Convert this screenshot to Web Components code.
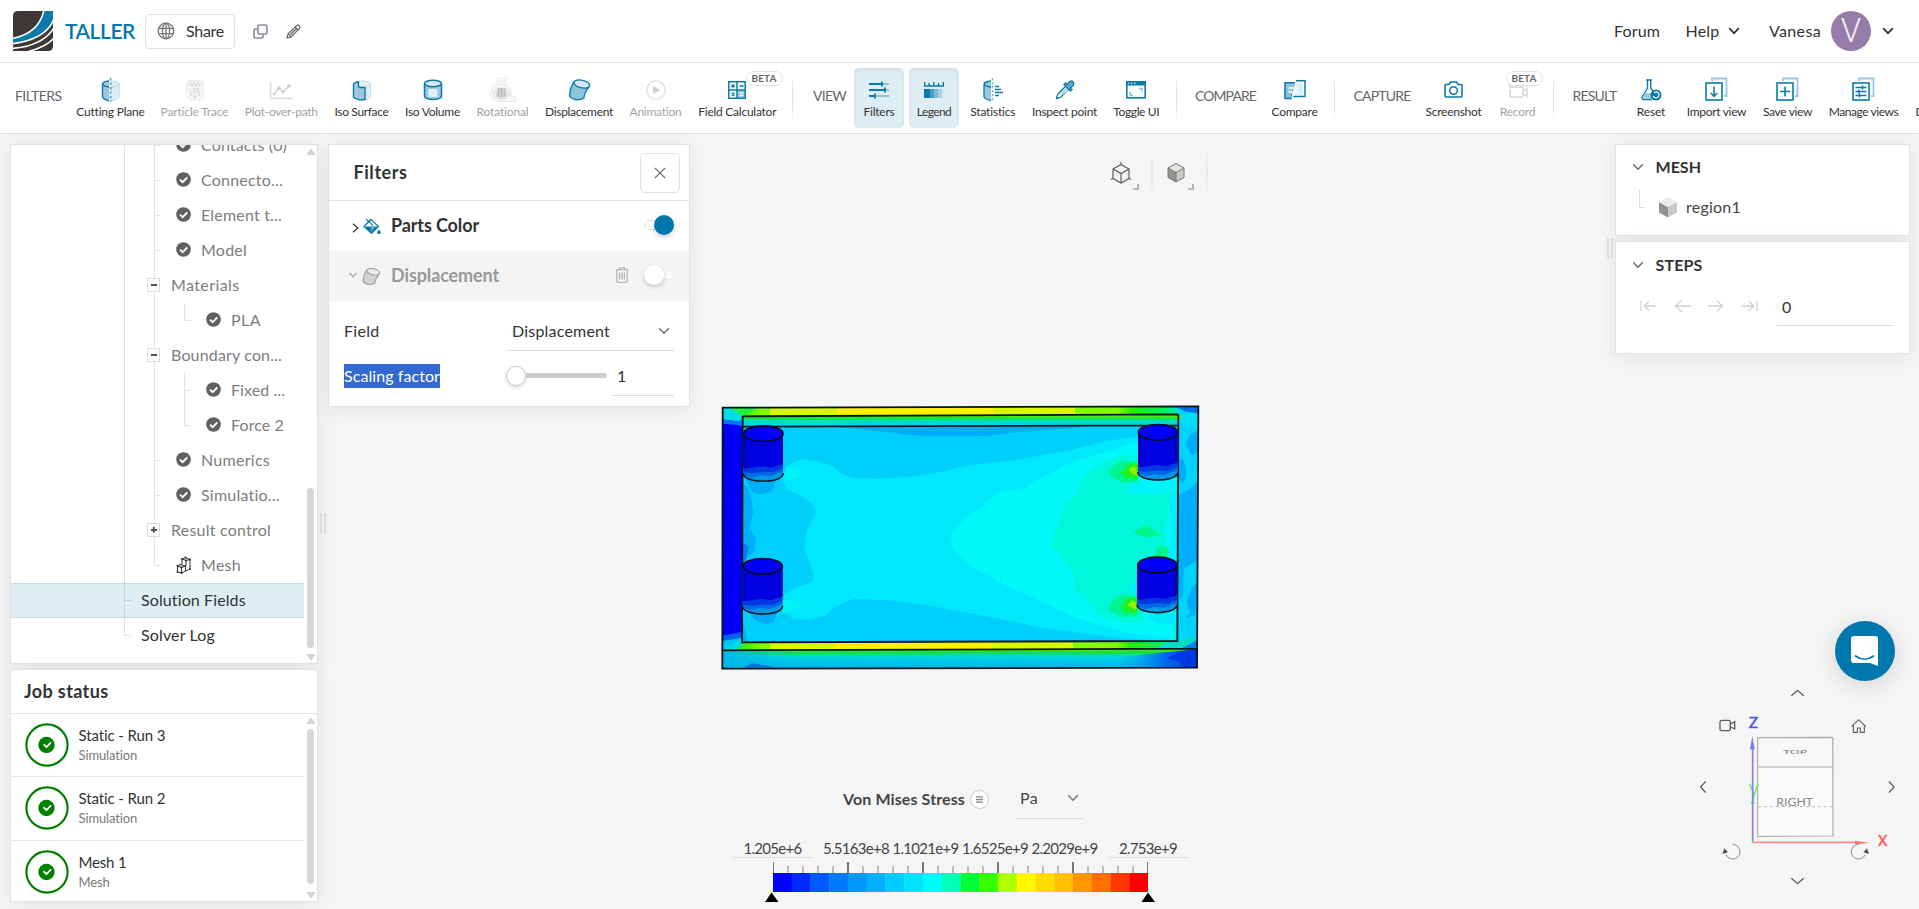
<!DOCTYPE html>
<html lang="en">
<head>
<meta charset="utf-8">
<title>TALLER</title>
<style>
html,body{margin:0;height:100%;overflow:hidden;background:#f5f5f5}
body{font:16px/20px Lato,"Liberation Sans",sans-serif;color:#333}
</style>
</head>
<body>
<sim-app></sim-app>
<script>
const define=(name,css,html,setup)=>customElements.define(name,class extends HTMLElement{
  connectedCallback(){
    if(this.shadowRoot)return;
    const root=this.attachShadow({mode:'open'});
    const t=document.createElement('template');
    t.innerHTML=`<style>${css}</style>${typeof html==='function'?html(this):html}`;
    root.append(t.content.cloneNode(true));
    if(setup)setup(this,root);
  }
});

/* Text whose tracking is adjusted so that it fills a given width */
define('fit-text',':host{display:inline-block;white-space:nowrap}span{display:inline-block}','<span><slot></slot></span>',(el,root)=>{
  const w=+el.getAttribute('w'),s=root.querySelector('span'),n=el.textContent.length;
  const now=s.getBoundingClientRect().width;
  if(w&&now)s.style.letterSpacing=((w-now)/n).toFixed(3)+'px';
});

const B='#0a7aab',L='#9cc9de',P='#dcedf5';
const svg=(w,h,b,x='')=>`<svg width="${w}" height="${h}" viewBox="0 0 ${w} ${h}" fill="none" ${x}>${b}</svg>`;
const disp=(a,l,p,d)=>`<path d="M3 6C8 1 14 2 17 4" stroke="${p}" stroke-width="1.2"/><path d="M2.500 5V16" stroke="${p}"/><path d="M7 4C4 8 3 13 2.500 18C5 22 12 23 17 20C17 15 20 12 22.500 8Z" fill="${l}" stroke="${a}" stroke-width="1.300"/><ellipse cx="14.800" cy="6" rx="8" ry="3.800" transform="rotate(12 14.800 6)" fill="${p}" stroke="${a}" stroke-width="1.300"/><path d="M4 16c4 3 8 3 13 1" stroke="${l}"/>`;
const pages=`<path d="M7 4V1.500H21.500V19H19" stroke="#9cc9de" stroke-width="1.800"/><rect x="1" y="6" width="16" height="17" fill="#fff" stroke="${B}" stroke-width="1.600"/>`;
const ICONS={
 logo:svg(40,40,`<defs><clipPath id="c"><path d="M5 0H40V35Q40 40 35 40H0V5Q0 0 5 0Z"/></clipPath></defs><g clip-path="url(#c)"><path d="M0 0H40V40H0Z" fill="#3e3735"/><path d="M31 -1C28 13 18 24 -1 27.500V33C22 30 36 21 41 8V-1Z" fill="#0a7aab"/><path d="M31 -1C28 13 18 24 -1 27.500M41 8C36 21 22 30 -1 32.800M41 17C34 28 20 36 -1 37.500M41 27C35 34 25 38 14 41" stroke="#fff" stroke-width="1.600"/></g>`),
 globe:svg(18,18,`<g stroke="#777" stroke-width="1.300"><circle cx="9" cy="9" r="7.800"/><ellipse cx="9" cy="9" rx="3.600" ry="7.800"/><path d="M1.500 6.300H16.500M1.500 11.700H16.500M9 1V17"/></g>`),
 copy:svg(15,15,`<g stroke="#59596a" stroke-width="1.100"><rect x="5" y="1" width="9" height="9" rx="1"/><path d="M4.500 5H2Q1 5 1 6V13Q1 14 2 14H9Q10 14 10 13V10.500"/></g>`),
 pencil:svg(15,15,`<g stroke="#59595f" stroke-width="1.100"><path d="M1 14L2 10L10.500 1.600Q12 .6 13.300 1.900T13.400 4.600L5 13Z"/><path d="M9 3L12 6M2.200 10L5 12.800M4.500 10.500L10.500 4.500"/></g>`),
 down:svg(12,8,`<path d="M1.200 1.200L6 6.200L10.800 1.200" stroke="currentColor" stroke-width="var(--sw,1.500)"/>`),
 cutting:svg(20,24,`<path d="M1.500 6V19Q3 22 8 22.500V3Q2.500 3.500 1.500 6Z" fill="${L}"/><path d="M8 3Q2 3.500 1.500 6Q2.500 8.500 8 9M1.500 6V19Q3 22 8 22.500" stroke="${B}" stroke-width="1.400"/><path d="M10.500 3Q17.500 3.500 18.300 6V19Q17 22 10.500 22.500Z" fill="${P}" stroke="#c3deea"/><path d="M18 6Q16 9 11 9" stroke="#b5d7e6"/><path d="M9.500 0V24" stroke="#5fa9c8" stroke-width="1.800" stroke-dasharray="2.500 2"/>`),
 particle:svg(20,24,`<path d="M1.500 5V19C3 23 17 23 18.500 19V5" fill="#f6f6f6" stroke="#ececec"/><ellipse cx="10" cy="5" rx="8.500" ry="2.800" fill="#f5f5f5" stroke="#e7e7e7"/><path d="M5 4l2 4 2-4 2 4 2-4 2 4M6 10q-2 2 0 4q2 2 0 4M10 9v10M14 10q-2 2 0 4q2 2 0 4M6 18l-1.500-2M10 20l-2-2M10 20l2-2M14 18l1.500-2M8 10q2 3 0 5M12 10q2 3 0 5" stroke="#d6d6d6"/>`),
 plot:svg(24,24,`<path d="M1.700 4V20.300H23" stroke="#dedede" stroke-width="1.700"/><path d="M5 16L10 10L14 14L20 8" stroke="#ccc" stroke-width="1.400"/><g fill="#ccc"><circle cx="5" cy="16" r="1.200"/><circle cx="10" cy="10" r="1.700"/><circle cx="14" cy="14" r="1.700"/><circle cx="20" cy="8" r="1.700"/></g>`),
 isosurf:svg(20,24,`<path d="M1.500 6V19C3 23 17 23 18.500 19V6" fill="${P}" stroke="#c3deea"/><ellipse cx="10" cy="6" rx="8.500" ry="3" fill="#e6f2f7" stroke="#b9d9e7"/><path d="M1.500 6V19C3 21.500 9 22.500 13 21.500V9.500H6.500V4Q2 4.500 1.500 6Z" fill="${L}" stroke="${B}" stroke-width="1.400"/><path d="M6.500 9.500V21" stroke="#8abed6"/>`),
 isovol:svg(20,24,`<path d="M1.500 5.500V18.500C3 22.500 17 22.500 18.500 18.500V5.500" fill="${L}" stroke="${B}" stroke-width="1.500"/><ellipse cx="10" cy="5.500" rx="8.500" ry="3.200" fill="#d6eaf3" stroke="${B}" stroke-width="1.500"/><rect x="5.500" y="11" width="9" height="8" fill="#e4f1f7"/>`),
 rotational:svg(28,26,`<path d="M8 2.500V8.500H17V2.500" fill="#f7f7f7" stroke="#eee"/><ellipse cx="12.500" cy="2.500" rx="4.500" ry="1.700" stroke="#e8e8e8"/><path d="M12 7C4 7 1.500 13 1.500 17C2 22 6 24.500 12 24.500H26.500V19H22.500C23 11 18 7 12 7Z" fill="#f7f7f7" stroke="#e8e8e8"/><ellipse cx="12.500" cy="16.500" rx="8" ry="5.500" fill="#f0f0f0" stroke="#dadada"/><path d="M7 19L9 11H16L18 19Q12 22 7 19Z" fill="#d0d0d0"/><path d="M10 11L9 20M12.500 11V21M15 11L16 20" stroke="#bebebe"/>`),
 displacement:svg(24,24,disp(B,'#8fc3da','#d4e8f1')),
 dispgray:svg(20,18,`<g transform="scale(.82 .8)">${disp('#999','#d3d3d3','#e9e9e9')}</g>`),
 play:svg(20,20,`<circle cx="10" cy="10" r="9.200" stroke="#dedede" stroke-width="1.300"/><path d="M7 6V14L14.500 10Z" fill="#d0d0d0"/>`),
 calc:svg(18,18,`<path d="M9 9H17.500V17.500H9Z" fill="#9cc9de"/><path d="M.8 .8H17.200V17.200H.8ZM9 .8V17.200M.8 9H17.200" stroke="${B}" stroke-width="1.500"/><path d="M3 5H7M5 3V7M11.500 5H15.500M3.700 11.700L6.500 14.500M6.500 11.700L3.700 14.500" stroke="${B}" stroke-width="1.300"/><path d="M11.500 12H15.500M11.500 14.500H15.500" stroke="#fff"/>`),
 sliders:svg(20,18,`<g stroke="#8fc3da" stroke-width="2"><path d="M0 3H20M0 9H20M0 15H20"/></g><g stroke="${B}" stroke-width="2"><path d="M0 3H13M6 9H16M0 9H15M0 15H6"/></g><path d="M13 .5V5.500M16 6.500V11.500M6 12.500V17.500" stroke="${B}" stroke-width="1.800"/>`),
 legend:svg(20,18,`<path d="M.7 1V5H19.300V1M5 2V5M9.800 1V5M14.500 2V5" stroke="${B}" stroke-width="1.400"/><path d="M0 8H6V17H0Z" fill="${B}"/><path d="M6 8H10V17H6Z" fill="#4d9dc0"/><path d="M10 8H14V17H10Z" fill="#7fb9d1"/><path d="M14 8H18V17H14Z" fill="#a9d0e1"/><path d="M18 8H20V17H18Z" fill="#cfe5ef"/>`),
 statistics:svg(20,24,`<path d="M1 6V19Q3 22 8 22.500V3Q2 3.500 1 6Z" fill="${L}"/><path d="M8 3Q2 3.500 1 6Q2 8.500 8 9M1 6V19Q3 22 8 22.500" stroke="${B}" stroke-width="1.300"/><path d="M9.500 0V24" stroke="#7fb9d1" stroke-width="1.600" stroke-dasharray="2.500 1.500"/><path d="M12 8.500H16M12 11.500H18M12 14.500H20M12 17.500H16" stroke="${B}" stroke-width="1.300"/>`),
 dropper:svg(20,20,`<path d="M11 6L3 14Q2 16 1.500 18.500Q4 18 6 17L14 9" fill="#fff" stroke="${B}" stroke-width="1.300"/><path d="M4.500 14.500H9L14 9.500L11 7Z" fill="#b7d8e6"/><path d="M9 4.500L15.500 11L17 9.500L15.500 8L18.500 5Q19.500 3 18 1.700T14.800 1.500L12 4.500L10.500 3Z" fill="#5fa9c8" stroke="${B}" stroke-width="1.300"/>`),
 toggle:svg(20,18,`<rect x=".8" y=".8" width="18.400" height="16" fill="#fff" stroke="${B}" stroke-width="1.600"/><path d="M0 0H20V4.500H0Z" fill="${B}"/><path d="M2 2.200H3.500M5 2.200H6.500M8 2.200H9.500" stroke="#fff"/><path d="M4 11V14H7M13 7.500H16V10.500" stroke="#7fb9d1" stroke-width="1.300"/>`),
 compare:svg(22,20,`<path d="M12 .8H21V16.500H9" stroke="${B}" stroke-width="1.500"/><path d="M1 2.800H11.500L7 18.500H1Z" fill="#8fc3da" stroke="${B}" stroke-width="1.500"/><path d="M12 3H19V14.500H10Z" fill="#dcedf5"/><path d="M4.500 8H14M4.500 12H15M12 2L8 18" stroke="#fff" stroke-width="1.700"/>`),
 camera:svg(20,18,`<path d="M1 4.500Q1 3.500 2 3.500H5L6.500 1H12.500L14 3.500H17Q18 3.500 18 4.500V15Q18 16 17 16H2Q1 16 1 15Z" stroke="${B}" stroke-width="1.600"/><circle cx="9.500" cy="9.500" r="3.800" stroke="${B}" stroke-width="1.500"/>`),
 record:svg(22,18,`<path d="M3 8V15Q3 16 4 16H15Q16 16 16 15V8Q16 6 14 6H2M16 10L20 8V15L16 13M2 2Q2 6 6 6H12Q17 6 17 2" stroke="#d6d6d6" stroke-width="1.500"/>`),
 reset:svg(21,22,`<path d="M5 1H11M6.500 1V9L1 18.500Q.8 20.500 2.500 20.500H11" stroke="${B}" stroke-width="1.300"/><path d="M9.700 1V9L14 15" stroke="${B}" stroke-width="1.300"/><path d="M3.500 14H12V20H2Z" fill="#9cc9de"/><circle cx="15" cy="16" r="5.500" fill="${B}"/><path d="M12.200 17A3 3 0 1 0 13 13.700" stroke="#fff" stroke-width="1.200"/>`),
 import:svg(24,25,pages+`<path d="M9 9.500V19M5.800 16L9 19.300L12.200 16" stroke="${B}" stroke-width="1.500"/>`),
 save:svg(24,25,pages+`<path d="M9 9.500V19.500M4 14.500H14" stroke="${B}" stroke-width="1.600"/>`),
 manage:svg(24,25,pages+`<path d="M3.500 10.500H14.500M3.500 14.500H14.500M3.500 18.500H14.500M10.500 8.500V12.500M7 12.500V16.500M7.500 16.500V20.500" stroke="${B}" stroke-width="1.400"/>`),
 check:svg(15,15,`<circle cx="7.500" cy="7.500" r="7.300" fill="#606060"/><path d="M4 7.600L6.700 10.200L11.300 5.300" stroke="#fff" stroke-width="1.900"/>`),
 mesh:svg(16,18,`<g stroke="#444" stroke-width="1.100"><path d="M1.500 10V16L5.500 17L14 13V3.500L9.500 1.500L6 3V9.500M1.500 10L4 8.500L9.500 10V15M1.500 10L5.500 11.500V17M5.500 11.500L9.500 10M6 3L10 4.500L14 3.500M10 4.500V10"/></g><g fill="#333"><circle cx="1.500" cy="10" r="1"/><circle cx="1.500" cy="16" r="1"/><circle cx="5.500" cy="11.500" r="1"/><circle cx="5.500" cy="17" r="1"/><circle cx="6" cy="3" r="1"/><circle cx="9.500" cy="1.500" r="1"/><circle cx="14" cy="3.500" r="1"/><circle cx="14" cy="13" r="1"/><circle cx="10" cy="4.500" r="1"/></g>`),
 done:svg(44,44,`<circle cx="22" cy="22" r="20.600" fill="#fff" stroke="#008000" stroke-width="2.200"/><circle cx="21.500" cy="22" r="8.200" fill="#008000"/><path d="M18.500 21.300L21.500 24L26 19.300" stroke="#fff" stroke-width="1.700"/>`),
 close:svg(12,12,`<path d="M.8 .8L11.200 11.200M11.200 .8L.8 11.200" stroke="#666" stroke-width="1.200"/>`),
 right:svg(7,10,`<path d="M1 .8L5.800 5L1 9.200" stroke="#333" stroke-width="1.300"/>`),
 bucket:svg(18,17,`<path d="M1 8.500L8 1.500L15.500 8.500L8.500 15.500Z" fill="#fff" stroke="${B}" stroke-width="1.200"/><path d="M1 8.500H15L8.500 15.500Z" fill="${B}"/><path d="M8 8.500H12L8.500 14Z" fill="#69aeca"/><path d="M3 .8L10 7.500M8 1.500L4 5" stroke="${B}" stroke-width="1.100"/><path d="M16 11.200Q13.800 14 14.200 15.200Q16 17 17.700 15.200Q18 14 16 11.200Z" fill="${B}"/>`),
 trash:svg(14,16,`<path d="M.5 2.800H13.500M4.500 2.500V.8H9.500V2.500M1.800 3.200V14Q1.800 15.300 3 15.300H11Q12.200 15.300 12.200 14V3.200M4.700 5.500V12.500M7 5.500V12.500M9.300 5.500V12.500" stroke="#aaa" stroke-width="1.100"/>`),
 cubewire:svg(22,24,`<path d="M11 3.500L19 8V17.500L11 22L3 17.500V8ZM3 8L11 12.500L19 8M11 12.500V22M11 3.500V1M3 17.500L1 18.500M19 17.500L21 18.500" stroke="#54524e" stroke-width="1.100"/>`),
 cubegray:svg(20,22,`<path d="M10 1.500L18 6V15.500L10 20L2 15.500V6Z" fill="#c9c9c9"/><path d="M10 1.500L18 6L10 10.500L2 6Z" fill="#e6e6e6"/><path d="M2 6L10 10.500V20L2 15.500Z" fill="#969490"/><path d="M10 1.500L18 6V15.500L10 20L2 15.500V6ZM2 6L10 10.500L18 6M10 10.500V20" stroke="#77756f" stroke-width="1"/>`),
 corner:svg(6,6,`<path d="M5 0V5H0" stroke="#aaa" stroke-width="1.700"/>`),
 cube:svg(18,21,`<path d="M9 .3L18 5.300L9 10.300L0 5.300Z" fill="#ececec"/><path d="M0 5.300L9 10.300V20.500L0 15.500Z" fill="#92918d"/><path d="M18 5.300L9 10.300V20.500L18 15.500Z" fill="#c7c8ca"/>`),
 first:svg(16,12,`<path d="M1 1V11M16 6H4M9 1.500L4.200 6L9 10.500" stroke="#d0d0d0" stroke-width="1.300"/>`),
 prev:svg(17,14,`<path d="M17 7H1.500M8 1L1.500 7L8 13" stroke="#d0d0d0" stroke-width="1.300"/>`),
 next:svg(16,12,`<path d="M0 6H14.500M9 1L14.500 6L9 11" stroke="#d0d0d0" stroke-width="1.300"/>`),
 last:svg(16,12,`<path d="M15 1V11M0 6H12M7 1.500L11.800 6L7 10.500" stroke="#d0d0d0" stroke-width="1.300"/>`),
 chat:svg(28,32,`<path d="M3 1H24Q27 1 27 4V31L19 28H3Q0 28 0 25V4Q0 1 3 1Z" fill="#fff"/><path d="M4.500 21Q13.500 27.500 22.500 21" stroke="#0078ae" stroke-width="1.700" stroke-linecap="round"/>`)
};
define('ui-icon',':host{display:inline-flex;flex:none}svg{display:block;overflow:visible}',el=>ICONS[el.getAttribute('name')]);

define('page-header',`:host{display:flex;align-items:center;background:#fff;border-bottom:1px solid #e2e2e2;box-sizing:border-box;height:63px;padding:0 25px 0 13px}
.name{font-size:21px;font-weight:600;color:#0078ae;margin:0 10px 0 12px}
.share{display:flex;align-items:center;box-sizing:border-box;width:90px;height:35px;border:1px solid #e2e2e2;border-radius:4px;padding-left:11px;gap:11px}
.sp{flex:1}.av{width:40px;height:40px;border-radius:50%;background:#967bab;color:#eee;font:33px/40px Roboto,sans-serif;font-weight:300;text-align:center;margin:0 11px 0 10px}
ui-icon[name=down]{--sw:1.700}`,
`<ui-icon name="logo"></ui-icon><fit-text class="name" w="70">TALLER</fit-text>
<div class="share"><ui-icon name="globe"></ui-icon><fit-text w="38">Share</fit-text></div>
<ui-icon name="copy" style="margin-left:18px"></ui-icon><ui-icon name="pencil" style="margin-left:18px"></ui-icon>
<span class="sp"></span><fit-text w="46">Forum</fit-text><fit-text w="34" style="margin:0 8.500px 0 25.500px">Help</fit-text><ui-icon name="down"></ui-icon>
<fit-text w="52" style="margin-left:29px">Vanesa</fit-text><div class="av">V</div><ui-icon name="down"></ui-icon>`);

define('tool-item',`:host{display:flex;flex-direction:column;align-items:center;flex:none;height:60px;border-radius:5px;font-size:12px;line-height:16px;color:#333;position:relative}
:host([off]){color:#a3a3a3}:host([on]){background:#dfedf4;box-shadow:inset 0 2px 5px #0001}
.i{height:26px;margin-top:9px;display:flex;align-items:center;justify-content:center}
.t{margin-top:1px}.b{position:absolute;font-size:10px;line-height:13px;font-weight:700;color:#666;background:#fff;border:1px solid #e2e2e2;border-radius:8px;padding:0 5px;top:3px;white-space:nowrap}`,
el=>{const a=k=>el.getAttribute(k);el.style.width=a('w')+'px';
return `<span class="i"><ui-icon name="${a('icon')}"></ui-icon></span><fit-text class="t" w="${a('t')}">${a('label')}</fit-text>${el.hasAttribute('beta')?`<span class="b" style="left:${a('beta')}px"><fit-text w="25">BETA</fit-text></span>`:''}`});

define('tool-bar',`:host{display:flex;align-items:center;height:71px;box-sizing:border-box;border-bottom:1px solid #e0e0e0;background:#fff;padding:0 0 1px 15px;overflow:hidden;gap:5px}
.g{font-size:14px;color:#666;flex:none;padding-bottom:3px}.s{width:1px;height:46px;flex:none;background:linear-gradient(#fff,#e2e2e2 30%,#e2e2e2 70%,#fff)}`,
()=>{const it=(w,t,icon,label,x='')=>`<tool-item w="${w}" t="${t}" icon="${icon}" label="${label}" ${x}></tool-item>`;
const g=(t,w,m)=>`<fit-text class="g" w="${w}" style="margin-right:${m}px">${t}</fit-text>`;
const s=(a,b)=>`<span class="s" style="margin:0 ${b}px 0 ${a}px"></span>`;
return g('FILTERS',46.500,4.500)+it(79,68,'cutting','Cutting Plane')+it(79,68,'particle','Particle Trace','off')+it(84.500,73,'plot','Plot-over-path','off')+it(66,54,'isosurf','Iso Surface')+it(66,55,'isovol','Iso Volume')+it(64,52,'rotational','Rotational','off')+it(79,68,'displacement','Displacement')+it(64,52,'play','Animation','off')+it(89.500,78,'calc','Field Calculator','beta="53"')
+s(5,15)+g('VIEW',33,3)+it(50,31,'sliders','Filters','on')+it(50,34.500,'legend','Legend','on')+it(57.500,45.500,'statistics','Statistics')+it(76,65,'dropper','Inspect point')+it(57.500,46,'toggle','Toggle UI')
+s(5.500,13.500)+g('COMPARE',61,4.500)+it(58,46,'compare','Compare')+s(5,14)+g('CAPTURE',57,4.500)+it(67,56,'camera','Screenshot')+it(51,35.500,'record','Record','off beta="13.500"')
+s(5,13.500)+g('RESULT',44,4.500)+it(50,28.500,'reset','Reset')+it(71,59.500,'import','Import view')+it(61,49,'save','Save view')+it(81,69.500,'manage','Manage views')+it(66,53,'import','Download')});

define('tree-row',`:host{display:flex;height:35px;align-items:center;flex:none;color:#7d7d7d;box-sizing:border-box;padding-bottom:2px;position:relative;white-space:pre}
:host([sel]){background:#dfedf5;box-shadow:inset 0 1px #c5dfe9,inset 0 -1px #c5dfe9}:host([dark]){color:#333}
.v{position:absolute;width:1px;background:#0000001c}.h{position:absolute;height:1px;width:6px;top:17px;background:#0000001c}
.x{position:absolute;left:136px;top:10px;width:11px;height:12px;border:1px solid #dcdcdc;background:#fff}
.x:before,.x.p:after{content:"";position:absolute;left:2.500px;top:5px;width:6px;height:2px;background:#555}.x.p:before,.x.p:after{height:1.500px}.x.p:after{transform:rotate(90deg)}
fit-text{margin-left:10px}`,
el=>{const a=k=>el.getAttribute(k),d=+a('d');let h='';
const v=(x,e,s=0)=>`<i class="v" style="left:${x}px;top:${s}px;height:${e-s}px"></i>`,t=x=>`<i class="h" style="left:${x}px"></i>`;
h+=v(113,a('end')==='1'?18:35);if(d===1)h+=t(114);
if(d>1)h+=v(143,a('end')==='2'?18:35);
if(d===2&&!a('box'))h+=t(144);
if(d===3)h+=v(173,a('end')==='3'?18:35)+t(174);
if(a('box'))h+=`<i class="x ${a('box')}"></i>`;
const ic=a('icon'),pad=ic?(d===3?195:165):(d===1?120:150);
return h+`<span style="width:${pad}px;flex:none"></span>${ic?`<ui-icon name="${ic}" style="width:15px"></ui-icon>`:''}<fit-text w="${a('w')}">${a('label')}</fit-text>`});

const bar=(top,h)=>`<span class="sb"><svg width="10" height="7"><path d="M1 6.500L5 1L9 6.500Z" fill="#d4d4d4" stroke="#d4d4d4"/></svg><i style="margin-top:${top}px;height:${h}px"></i><span></span><svg width="10" height="7"><path d="M1 .5L5 6L9 .5Z" fill="#d4d4d4" stroke="#d4d4d4"/></svg></span>`;
const barCss='.sb{display:flex;flex-direction:column;align-items:center;width:13px;flex:none;box-sizing:border-box;padding:3px 0 2px}.sb i{width:7px;border-radius:4px;background:#d7d7d7}.sb span{flex:1}';
const card='background:#fff;border:1px solid #e2e2e2;box-sizing:border-box;box-shadow:0 3px 22px #00000012;';

define('sim-tree',`:host{display:flex;${card}height:520px;overflow:hidden}.r{flex:1;display:flex;flex-direction:column;margin-top:-17px;min-width:0}${barCss}`,
()=>{const r=(d,l,w,x='')=>`<tree-row d="${d}" label="${l}" w="${w}" ${x}></tree-row>`,c='icon="check"';
return '<div class="r">'+r(2,'Contacts (0)',86,c)+r(2,'Connecto...',82,c)+r(2,'Element t...',81,c)+r(2,'Model',46,c)+r(2,'Materials',68.500,'box="m"')+r(3,'PLA',30,c+' end="3"')+r(2,'Boundary con...',111,'box="m"')+r(3,'Fixed ...',54,c)+r(3,'Force 2',53,c+' end="3"')+r(2,'Numerics',69,c)+r(2,'Simulatio...',79,c)+r(2,'Result control',100,'box="p"')+r(2,'Mesh',40,'icon="mesh" end="2"')+r(1,'Solution Fields',105,'sel dark')+r(1,'Solver Log',74,'dark end="1"')+'</div>'+bar(333,160)});

define('job-row',`:host{display:flex;height:64px;box-sizing:border-box;border-bottom:1px solid #e3e6ea;padding:9px 0 0 14px;gap:9.500px;align-items:flex-start;flex:none}
div{display:flex;flex-direction:column;align-items:flex-start;padding-top:2px;font-size:15px}.s{font-size:13px;line-height:21px;color:#7a7a7a}`,
el=>{const a=k=>el.getAttribute(k);return `<ui-icon name="done"></ui-icon><div><fit-text w="${a('w')}">${a('label')}</fit-text><fit-text class="s" w="${a('sw')}">${a('sub')}</fit-text></div>`});
define('job-status',`:host{display:flex;flex-direction:column;${card}height:233px;overflow:hidden}h2{margin:0;padding:0 13px;height:43px;font:700 18px/42px Lato;border-bottom:1px solid #e2e2e2;flex:none}
.b{display:flex;flex:1;min-height:0}.l{flex:1;overflow:hidden;display:flex;flex-direction:column}${barCss}`,
`<h2><fit-text w="84.500">Job status</fit-text></h2><div class="b"><div class="l"><job-row label="Static - Run 3" w="87" sub="Simulation" sw="59" style="height:63px"></job-row><job-row label="Static - Run 2" w="87" sub="Simulation" sw="59"></job-row><job-row label="Mesh 1" w="48" sub="Mesh" sw="31"></job-row></div>${bar(5,155)}</div>`);

define('grip-handle',':host{display:block;width:2px;height:20px;border:solid #dcdcdc;border-width:0 2px}','');

define('toggle-switch',`:host{display:block;position:relative;width:30px;height:20px;flex:none}i{position:absolute;top:5px;width:28px;height:8px;border:1px solid #e4e4e4;border-radius:5px;background:#fff}b{position:absolute;width:20px;height:20px;border-radius:50%;box-shadow:0 2px 5px #0003;background:#fff;left:0}
:host([on]) b{left:10px;background:#0078ae}:host([off]) i{border-color:#eee;background:#fafafa}`,'<i></i><b></b>');

define('filters-panel',`:host{display:block;${card}width:362px;height:263px}
.h{display:flex;align-items:center;justify-content:space-between;height:55px;border-bottom:1px solid #e2e2e2;padding:0 9px 0 24.500px;font-weight:700;font-size:18px}.h fit-text{margin-top:-2px}
.x{display:flex;align-items:center;justify-content:center;width:38px;height:38px;border:1px solid #e2e2e2;border-radius:5px}
.r{display:flex;align-items:center;height:50px;font-size:18px;font-weight:700;padding-right:15px;box-sizing:border-box;padding-bottom:2px}.r fit-text{margin-right:auto}
.g{background:#f4f4f4;color:#999;--sw:1.300}
.f{display:flex;align-items:center;padding:0 15px;justify-content:space-between;height:49px}.u{box-sizing:border-box;border-bottom:1px solid #ddd}
.sel{width:167px;height:39px;display:flex;align-items:center;justify-content:space-between;padding:0 4px 1px 5px;color:#333}.sel ui-icon{color:#666;--sw:1.300}
.hl{background:#3367d1;color:#fff;line-height:24px}
.sl{display:flex;align-items:center;width:101px;margin-left:auto;margin-right:5px;margin-top:-1px}.sl b{width:18px;height:18px;border:1px solid #ccc;border-radius:50%;background:#fff;box-shadow:0 2px 4px #0002}.sl i{height:5px;flex:1;border-radius:0 3px 3px 0;background:#ccc}
.n{width:62px;height:38px;padding:8px 5px;margin-top:2px}`,
`<div class="h"><fit-text w="54">Filters</fit-text><span class="x"><ui-icon name="close"></ui-icon></span></div>
<div class="r"><ui-icon name="right" style="margin:5px 4px 0 23px"></ui-icon><ui-icon name="bucket" style="margin:2px 10px 0 0"></ui-icon><fit-text w="88" style="margin-top:-1px">Parts Color</fit-text><toggle-switch on></toggle-switch></div>
<div class="r g"><ui-icon name="down" style="margin:0 2px 0 18px;transform:scale(.78)"></ui-icon><ui-icon name="dispgray" style="margin:1px 10px 0 0"></ui-icon><fit-text w="108">Displacement</fit-text><ui-icon name="trash" style="margin-right:15.500px"></ui-icon><toggle-switch off></toggle-switch></div>
<div class="f" style="padding-bottom:1px;box-sizing:border-box;height:59px;align-items:flex-start;padding-top:11px"><fit-text w="35.500" style="margin-top:9px">Field</fit-text><span class="sel u"><fit-text w="98">Displacement</fit-text><ui-icon name="down"></ui-icon></span></div>
<div class="f" style="height:32px"><span class="hl"><fit-text w="96">Scaling factor</fit-text></span><span class="sl"><b></b><i></i></span><span class="n u">1</span></div>`);

define('view-modes',`:host{display:flex;align-items:center;height:58px}.s{width:2px;height:46px;background:linear-gradient(#f5f5f5,#e6e6e6,#f5f5f5)}.c{position:relative;display:flex;align-items:center;justify-content:center;height:40px}.c ui-icon+ui-icon{position:absolute;right:13px;bottom:3px}`,
`<span class="c" style="width:60px;padding-left:1px;box-sizing:border-box"><ui-icon name="cubewire"></ui-icon><ui-icon name="corner" style="right:12px"></ui-icon></span><span class="s"></span><span class="c" style="width:47px;padding-right:6px"><ui-icon name="cubegray"></ui-icon><ui-icon name="corner" style="right:12px"></ui-icon></span><span class="s"></span>`);

/* Von Mises contour plot of the loaded part */
const cyl=(x,y,s)=>`<g><path d="M${x} ${y}V${y+122}Q${x+8} ${y+142} ${x+60} ${y+144}Q${x+112} ${y+140} ${x+119} ${y+122}V${y}Z" fill="#0098e4"/><path d="M${x} ${y}V${y+124}L${x+25} ${y+132}L${x+50} ${y+125}L${x+80} ${y+128}L${x+119} ${y+114}V${y}Z" fill="#0068e4"/><path d="M${x} ${y}V${y+116}L${x+30} ${y+118}L${x+60} ${y+114}L${x+90} ${y+116}L${x+119} ${y+104}V${y}Z" fill="#0038e2"/><path d="M${x} ${y}V${y+105}L${x+25} ${y+102}L${x+60} ${y+98}L${x+85} ${y+102}L${x+119} ${y+89}V${y}Z" fill="#0000e2"/><path d="M${x} ${y}H${x+10}V${y+103}H${x}ZM${x+109} ${y}H${x+119}V${y+91}L${x+109} ${y+95}Z" fill="#0000c4"/><ellipse cx="${x+60}" cy="${y}" rx="59" ry="23.500" fill="#0000fb" stroke="#000c20" stroke-width="5"/><path d="M${x-1} ${y+119}Q${x} ${y+132} ${x+25} ${y+139}Q${x+60} ${y+147} ${x+95} ${y+139}Q${x+120} ${y+131} ${x+120} ${y+118}" fill="none" stroke="#012" stroke-width="4.500"/></g>`;
const spot=(x,y)=>`<path d="M${x-86} ${y}L${x-62} ${y-28}L${x-30} ${y-32}L${x} ${y-26}V${y+32}L${x-42} ${y+34}L${x-80} ${y+16}Z" fill="#00f68c"/><path d="M${x-50} ${y+4}L${x-28} ${y-22}L${x} ${y-26}V${y+22}L${x-35} ${y+20}Z" fill="#20f420"/><path d="M${x-30} ${y-2}L${x-14} ${y-16}L${x-4} ${y-8}V${y+14}Z" fill="#90f000"/>`;
define('stress-model',':host{display:block}svg{display:block}',`<svg width="500" height="285" viewBox="0 0 1500 855">
<defs>
<linearGradient id="y"><stop offset="0" stop-color="#00e890"/><stop offset=".05" stop-color="#40f000"/><stop offset=".08" stop-color="#80fb00"/><stop offset=".1" stop-color="#80fb00"/><stop offset=".1" stop-color="#d8f800"/><stop offset=".24" stop-color="#d8f800"/><stop offset=".24" stop-color="#fbf200"/><stop offset=".57" stop-color="#fbf200"/><stop offset=".57" stop-color="#d8f800"/><stop offset=".74" stop-color="#d8f800"/><stop offset=".74" stop-color="#80fb00"/><stop offset=".83" stop-color="#80fb00"/><stop offset=".86" stop-color="#20f000"/><stop offset=".93" stop-color="#00f060"/><stop offset=".96" stop-color="#00e0e8"/><stop offset="1" stop-color="#0078f0"/></linearGradient>
<linearGradient id="t" x2="0" y2="1"><stop offset="0" stop-color="#a0ee00"/><stop offset=".3" stop-color="#10e830"/><stop offset=".55" stop-color="#00ddc8"/><stop offset="1" stop-color="#00d0f4"/></linearGradient>
<linearGradient id="b" x2="0" y2="1"><stop offset="0" stop-color="#60e800"/><stop offset=".2" stop-color="#10e040"/><stop offset=".38" stop-color="#00dcd8"/><stop offset=".6" stop-color="#00c8ea"/><stop offset="1" stop-color="#00b4e8"/></linearGradient>
<linearGradient id="bl"><stop offset="0" stop-color="#00b8ea"/><stop offset=".6" stop-color="#00b8ea" stop-opacity="0"/></linearGradient>
<linearGradient id="rc"><stop offset="0" stop-color="#00c0f0" stop-opacity="0"/><stop offset=".6" stop-color="#0070f0"/><stop offset="1" stop-color="#0030e0"/></linearGradient>
<clipPath id="in"><path d="M97 95L1404 91L1402 738L96 742Z"/></clipPath>
</defs>
<path d="M38 38L1465 34L1461 818L37 821Z" fill="#00d0f8"/>
<path d="M38 76H97V728H38Z" fill="#0000fa"/><path d="M38 70Q60 82 97 76V96L85 90L38 86Z" fill="#0078f4"/><path d="M38 722L97 710V735L38 745Z" fill="#0060f0"/><path d="M38 738L97 728V765H38Z" fill="#00c8f0"/><path d="M40 765L96 738H130V765Z" fill="#10e888"/>
<path d="M38 38L1465 34L1440 58L98 64L38 60Z" fill="url(#y)"/><path d="M38 40H80L97 64V76Q70 82 38 70Z" fill="#00dfe8"/><path d="M60 40L98 64L140 40Z" fill="#20ef40"/>
<path d="M98 64L1404 58V92L98 95Z" fill="url(#t)"/>
<g clip-path="url(#in)"><path d="M90 85H1410V750H90Z" fill="#00e8fb"/>
<path d="M90 90H1300V120L1180 140L1085 165L1000 180L900 198L780 210L690 232L610 244L510 252L430 248L395 238L370 214L330 200L275 192L240 208L218 255L235 285L280 305L305 325L318 350L305 380L288 410L284 465L298 500L311 540L308 560L245 585L222 600L220 650L245 668L290 674L345 662L370 640L400 624L430 612L525 615L650 630L750 650L850 668L950 688L1000 700L1085 710L1220 728L1390 740V750H90Z" fill="#00cffb"/>
<path d="M385 97L480 106L555 113L600 121L700 124L830 123L895 114L990 107L1130 95V88H385Z" fill="#00adfb"/>
<path d="M97 260L120 290L130 350L118 400L138 430L133 470L110 490L97 530Z" fill="#00adfb"/><path d="M97 440L116 455L110 485L97 515Z" fill="#007cf8"/><path d="M105 250H200L185 290L150 298L125 290Z" fill="#00adfb"/><path d="M110 645H205L190 682L165 688L135 675Z" fill="#00adfb"/><path d="M97 660L112 740H97Z" fill="#00adfb"/>
<path d="M230 215L265 222L270 245L240 255L220 250ZM220 612L265 620L280 635L240 648L218 655Z" fill="#00f4f2"/>
<path d="M1404 120L1330 135L1250 150L1200 168L1120 190L1080 204L1040 224L990 250L945 278L870 293L830 318L820 336L785 352L745 390L725 415L720 448L740 475L780 513L820 535L880 568L945 597L1015 630L1090 665L1165 690L1260 715L1404 734Z" fill="#00f8f8"/>
<path d="M1283 180L1225 184L1170 204L1130 240L1105 275L1100 300L1065 322L1060 350L1046 380L1044 402L1030 412L1034 432L1022 450L1040 470L1055 490L1068 510L1090 530L1092 575L1110 600L1140 630L1160 650L1200 672L1260 685L1300 680L1285 550L1350 480L1368 450L1366 400L1378 350L1375 325L1390 285L1330 299L1255 295L1262 265L1290 240Z" fill="#00f7da"/>
<path d="M1254 270L1270 255H1400V280L1340 298L1255 295ZM1258 570L1283 560V595L1262 590Z" fill="#00f3fb"/>
<path d="M1375 300L1404 285V740H1390L1385 560L1368 520L1390 400Z" fill="#00edf8"/><path d="M1310 665L1340 655H1404V690L1340 684Z" fill="#00e8fb"/>
<path d="M1271 408L1300 394H1320L1330 406L1355 422L1310 426L1280 418ZM1340 462L1350 452L1376 458L1374 485H1330ZM1308 371h6v6h-6ZM1390 235L1404 245V255Z" fill="#00f48c"/>
${spot(1284,229)}${spot(1282,632)}</g>
<path d="M1404 100L1463 70V738L1404 745Z" fill="#00d4fa"/><path d="M1463 105L1440 120L1428 145L1440 175L1450 180L1463 170ZM1406 190L1422 195L1430 235L1420 265L1406 255ZM1463 260L1440 280L1408 300V540L1420 560L1422 520L1440 510L1463 495Z" fill="#00adfb"/><path d="M1406 535L1420 565V600L1410 615ZM1463 560L1445 580L1430 620L1440 655L1425 670L1455 660Z" fill="#00adfb"/><path d="M1406 60L1463 40V100L1404 85Z" fill="#00ddf8"/><path d="M1400 38H1463V55L1430 50Z" fill="#0070f0"/><path d="M1365 55H1400L1420 65L1400 70Z" fill="#50ee00"/>
<path d="M96 742L1402 738L1460 762L38 765Z" fill="url(#y)"/><path d="M1365 742L1402 738L1420 730L1461 728V760L1340 762Z" fill="#00e0c8"/><path d="M1410 762L1461 735V762Z" fill="#0080f4"/><path d="M38 765L60 755L96 728L100 745L80 765Z" fill="#00dce0"/>
<path d="M38 766L1461 761V818L37 821Z" fill="url(#b)"/><path d="M38 766H420V820H38Z" fill="url(#bl)"/><path d="M1200 790L1461 762V818H1200Z" fill="url(#rc)"/><path d="M1370 790L1400 775L1461 764V817H1420L1405 798Z" fill="#0038e6"/><path d="M100 818L125 805L160 810L200 818Z" fill="#0078e0"/>
<g stroke="#02161c" stroke-width="5.500" fill="none"><path d="M38 38L1465 34L1461 818L37 821ZM98 64L1405 58M98 95L1404 91M98 64L96 742L1402 738L1405 58M38 766L1461 761"/></g>
${cyl(100,116)}${cyl(1284,112)}${cyl(98,514)}${cyl(1282,510)}
</svg>`);

define('color-legend',`:host{display:block;width:456px}.a{display:flex;align-items:center;height:40px;padding-left:110px}.a b{font-size:16px;color:#444}
.m{width:17px;height:17px;border:1px solid #ccc;border-radius:50%;background:#fff;margin:0 26px 0 5px;display:flex;align-items:center;justify-content:center}
.u{display:flex;justify-content:space-between;align-items:center;width:68px;height:38px;border-bottom:1px solid #ddd;box-sizing:border-box;padding:0 4px 2px 5px;color:#444;margin-top:1px}.u ui-icon{color:#777}
.n{display:flex;align-items:center;font-size:15px;height:20px;margin-top:19px;color:#444}.n>span{display:flex;justify-content:center;box-sizing:border-box}.e{width:80px;border-bottom:1px solid #e0e0e0;height:20px}
svg{display:block;overflow:visible}`,
()=>{const cs='#0000ff,#0028ff,#0058ff,#0078ff,#0098ff,#00b0ff,#00ccff,#00e2ff,#00fbff,#00ffb8,#00ff38,#38ff00,#b0ff00,#fff800,#ffdc00,#ffc000,#ff9800,#ff7000,#ff3800,#ff0000'.split(',');
let s='';cs.forEach((c,i)=>s+=`<path d="M${i*18.75} 11H${(i+1)*18.75+(i<19?.3:0)}V30H${i*18.75}Z" fill="${c}"/>`);
for(let i=0;i<=25;i++){const M=i%5===0,e=i===0?.5:i===25?-.5:0;s+=`<path d="M${i*15+e} ${M?0:4}V11" stroke="${M?'#777':'#bbb'}" stroke-width="${e?1:2}"/>`}
s+='<path d="M-8 40L-1.500 30.500L5.500 40ZM368.500 40L375 30.500L382 40Z" fill="#000"/>';
return `<div class="a"><b><fit-text w="122">Von Mises Stress</fit-text></b><span class="m"><svg width="7" height="7"><path d="M0 .8H7M0 3.500H7M0 6.200H7" stroke="#888" stroke-width="1.300"/></svg></span><span class="u"><fit-text w="18">Pa</fit-text><ui-icon name="down"></ui-icon></span></div>
<div class="n"><span class="e" style="padding-right:1px"><fit-text w="58">1.205e+6</fit-text></span>${['5.5163e+8','1.1021e+9','1.6525e+9','2.2029e+9'].map((t,i)=>`<span style="width:${i?69.500:66}px;margin-left:${i?0:10}px;padding-bottom:1px;${i?'padding-left:3.500px':''}"><fit-text w="66">${t}</fit-text></span>`).join('')}<span class="e" style="margin-left:auto;padding-right:2px"><fit-text w="58">2.753e+9</fit-text></span></div>
<svg width="375" height="41" style="margin:4px 0 0 40px">${s}</svg>`});

define('side-card',`:host{display:block;${card}}h3{display:flex;align-items:center;gap:11.500px;margin:0;font:700 16px/20px Lato;color:#333}h3 ui-icon{color:#666;--sw:1.300;margin-left:-1px}.c{padding:var(--top,12px) 15px 0 17px}`,
el=>`<div class="c"><h3><ui-icon name="down"></ui-icon><fit-text w="${el.getAttribute('w')}">${el.getAttribute('label')}</fit-text></h3><slot></slot></div>`);
define('region-row',`:host{display:flex;align-items:center;margin-top:12px;height:36px}i{width:5px;height:17px;border:solid #ddd;border-width:0 0 1px 1px;margin:-16px 14px 0 6px}fit-text{margin-left:9px;color:#444}`,'<i></i><ui-icon name="cube"></ui-icon><fit-text w="55">region1</fit-text>');
define('step-row',`:host{display:flex;align-items:center;margin-top:12px;padding-left:7px;height:38px}ui-icon{margin-right:17.500px}span{width:117px;box-sizing:border-box;height:37px;border-bottom:1px solid #ddd;padding:8px 5px;margin-left:auto;flex:none;margin-top:3px}`,'<ui-icon name="first"></ui-icon><ui-icon name="prev"></ui-icon><ui-icon name="next"></ui-icon><ui-icon name="last" style="margin-right:0"></ui-icon><span>0</span>');

define('chat-button',':host{display:flex;align-items:center;justify-content:center;width:60px;height:60px;border-radius:50%;background:#0078ae;box-shadow:0 4px 24px #0002}','<ui-icon name="chat"></ui-icon>');

define('view-cube',':host{display:block}svg{display:block}',`<svg width="239" height="224" viewBox="0 225 717 672" fill="none" font-family="Lato,sans-serif">
<g stroke="#5c5c5c" stroke-width="4"><path d="M334 257L352.500 241L371 257M334 805L352.500 821L371 805M77 514L62 531L77 548M627 514L642 531L627 548"/>
<rect x="120" y="331" width="31" height="31" rx="5"/><path d="M152 342L164 335V357L152 351"/><path d="M515 349L536 329L557 349M520 345V367H532V354H541V367H553V345" stroke-width="3.300"/></g>
<g stroke="#8a8a8a" stroke-width="3"><path d="M158 703A22 22 0 1 1 138 734"/><path d="M536 703A22 22 0 1 0 556 734"/></g><path d="M127 732L133 715L144 727ZM567 732L561 715L550 727Z" fill="#555"/>
<path d="M233 383L458 382L459 678L233 679Z" fill="#fbfbfb"/><path d="M233 383H458V470H233Z" fill="#f8f8f8"/>
<path d="M233 383L458 382L459 678L233 679ZM233 471H458" stroke="#aaa" stroke-width="3.500"/><path d="M233 590H458" stroke="#bbb" stroke-width="3" stroke-dasharray="10 8"/>
<text x="344" y="588" font-size="34" text-anchor="middle" fill="#888" textLength="110" lengthAdjust="spacingAndGlyphs">RIGHT</text>
<text transform="translate(345 432) scale(1.500 .62)" font-size="25" text-anchor="middle" fill="#777" textLength="48" lengthAdjust="spacingAndGlyphs">TOP</text>
<path d="M209 521L222 555L234 521M222 553L218 583" stroke="#60f060" stroke-width="4.500"/><path d="M213 575H223V582H213Z" fill="#60f080"/>
<path d="M218 695V415" stroke="#8080ff" stroke-width="5"/><path d="M217 378L224 418H210Z" fill="#7878ff"/>
<path d="M218 697H530" stroke="#ff9090" stroke-width="5"/><path d="M568 698L525 704V692Z" fill="#ff7878"/><circle cx="218" cy="697" r="3" fill="#70e070"/>
<text x="220" y="354" font-size="43" font-weight="500" stroke="#5050f4" stroke-width="1" text-anchor="middle" fill="#5050f4" textLength="28" lengthAdjust="spacingAndGlyphs">Z</text><text x="608" y="707" font-size="43" font-weight="500" stroke="#f55" stroke-width="1" text-anchor="middle" fill="#ff5555">X</text></svg>`);

define('sim-app',`:host{display:grid;grid-template-rows:63px 71px 1fr;height:100vh;width:100vw;overflow:hidden;background:#f5f5f5}
main{display:grid;grid-template-columns:308px 10px 362px 925px 295px;padding:10px 9px 8px 10px;min-height:0}
.l{display:flex;flex-direction:column;gap:5px}.hl{padding:369px 0 0 2px}.c{display:flex;flex-direction:column}
.r{display:flex;flex-direction:column;gap:5px;position:relative}.r chat-button{align-self:flex-end;margin:262px 15px 0 0}.r view-cube{margin:-1px -9px 0 auto}
.r grip-handle{position:absolute;left:-8px;top:94px}`,
`<page-header></page-header><tool-bar></tool-bar><main>
<div class="l"><sim-tree></sim-tree><job-status></job-status></div>
<div class="hl"><grip-handle></grip-handle></div>
<filters-panel></filters-panel>
<div class="c"><view-modes style="margin-left:400.500px"></view-modes><stress-model style="margin:193px 0 0 20px"></stress-model><color-legend style="margin:99px 0 0 43px"></color-legend></div>
<div class="r"><side-card label="MESH" w="45.500" style="height:92px"><region-row></region-row></side-card><side-card label="STEPS" w="47" style="height:113px;--top:13px"><step-row></step-row></side-card><grip-handle></grip-handle><chat-button></chat-button><view-cube></view-cube></div>
</main>`);
</script>
</body>
</html>
